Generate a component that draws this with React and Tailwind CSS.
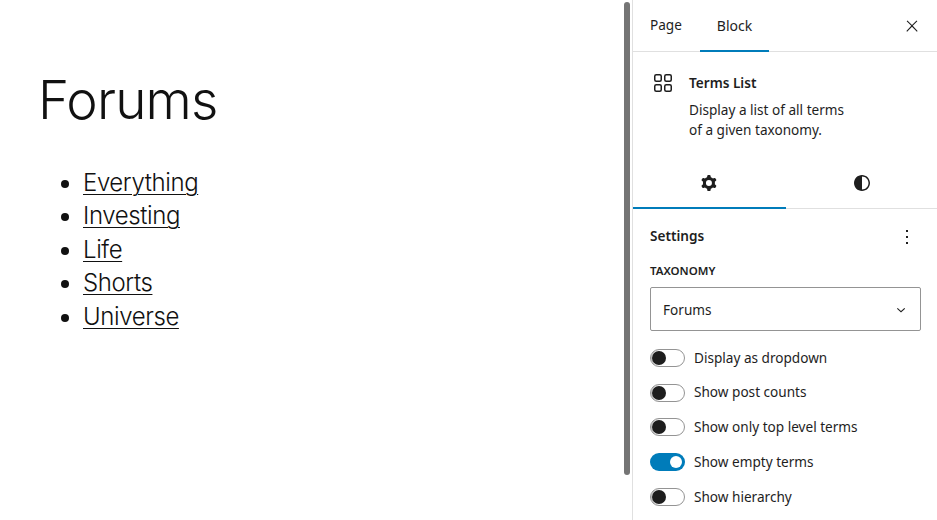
import React from 'react';

const Toggle = ({ label, on }) => (
  <div className="flex h-[19px] items-center gap-[9px]">
    {on ? (
      <span className="flex h-[18px] w-[35px] items-center justify-end rounded-full bg-[#007cba] pr-[3px]">
        <span className="h-[12px] w-[12px] rounded-full bg-white" />
      </span>
    ) : (
      <span className="flex h-[18px] w-[35px] items-center rounded-full border border-[#949494] pl-[1px] shadow-[inset_1px_0_0_#bbb]">
        <span className="h-[14px] w-[14px] rounded-full bg-[#1e1e1e]" />
      </span>
    )}
    <span className="text-[13.6px] text-[#1e1e1e]">{label}</span>
  </div>
);

const terms = ['Everything', 'Investing', 'Life', 'Shorts', 'Universe'];

export default function App() {
  return (
    <div className="flex h-[520px] w-[937px] overflow-hidden bg-white font-['Noto_Sans',sans-serif] text-[#1e1e1e]">
      <main className="w-[624px] pl-[38px] pt-[68px] font-['Inter',sans-serif] text-[#111]">
        <h1 className="text-[53px] font-light leading-[64px] tracking-[-0.8px]">Forums</h1>
        <ul className="ml-[45px] mt-[34px] list-disc text-[24px] font-light leading-[33.4px] tracking-[-0.4px] marker:text-[#111]">
          {terms.map((term) => (
            <li key={term}>
              <a href="#" className="underline decoration-1 underline-offset-[3px]">{term}</a>
            </li>
          ))}
        </ul>
      </main>

      <div className="w-[8px] pt-[2px]">
        <div className="h-[473px] w-[6px] rounded-full bg-[#757575]" />
      </div>

      <aside className="w-[305px] border-l border-[#e0e0e0]">
        <div className="flex h-[52px] items-stretch border-b border-[#e0e0e0]">
          <button className="w-[67px] px-[17px] text-left text-[13.6px] text-[#1e1e1e]">Page</button>
          <button className="relative w-[69px] text-[14px] text-[#1e1e1e]">
            Block
            <span className="absolute inset-x-0 bottom-[-1px] h-[2px] bg-[#007cba]" />
          </button>
          <button className="ml-auto flex w-[50px] items-center justify-center">
            <svg width="24" height="24" viewBox="0 0 24 24" fill="currentColor">
              <path d="M13 11.8l6.1-6.3-1-1-6.1 6.2-6.1-6.2-1 1 6.1 6.3-6.5 6.7 1 1 6.5-6.6 6.5 6.6 1-1z" transform="translate(3 3) scale(0.75)" />
            </svg>
          </button>
        </div>

        <div className="flex h-[105px] gap-[14px] pl-[18px] pt-[19px]">
          <svg width="24" height="24" viewBox="0 0 24 24" fill="none" stroke="#1e1e1e" strokeWidth="1.5" className="shrink-0">
            <rect x="3.75" y="3.75" width="6.5" height="6.5" rx="1.5" />
            <rect x="13.75" y="3.75" width="6.5" height="6.5" rx="1.5" />
            <rect x="3.75" y="13.75" width="6.5" height="6.5" rx="1.5" />
            <rect x="13.75" y="13.75" width="6.5" height="6.5" rx="1.5" />
          </svg>
          <div>
            <div className="text-[13.6px] font-semibold leading-[24px]">Terms List</div>
            <p className="mt-[5px] w-[165px] text-[13.6px] leading-[20px]">Display a list of all terms of a given taxonomy.</p>
          </div>
        </div>

        <div className="flex h-[52px] border-b border-[#e0e0e0]">
          <button className="relative flex w-[153px] shrink-0 items-center justify-center pr-[1px]">
            <svg width="24" height="24" viewBox="0 0 24 24" fill="#1e1e1e">
              <path fillRule="evenodd" clipRule="evenodd" d="M10.289 4.836A1 1 0 0 1 11.275 4h1.306a1 1 0 0 1 .987.836l.244 1.466c.787.26 1.503.679 2.108 1.218l1.393-.522a1 1 0 0 1 1.216.437l.653 1.13a1 1 0 0 1-.23 1.273l-1.148.944a6.025 6.025 0 0 1 0 2.435l1.149.946a1 1 0 0 1 .23 1.272l-.653 1.13a1 1 0 0 1-1.216.437l-1.394-.522c-.605.54-1.32.958-2.108 1.218l-.244 1.466a1 1 0 0 1-.987.836h-1.306a1 1 0 0 1-.986-.836l-.244-1.466a5.995 5.995 0 0 1-2.108-1.218l-1.394.522a1 1 0 0 1-1.217-.436l-.653-1.131a1 1 0 0 1 .23-1.272l1.149-.946a6.026 6.026 0 0 1 0-2.435l-1.148-.944a1 1 0 0 1-.23-1.272l.653-1.131a1 1 0 0 1 1.217-.437l1.393.522a5.994 5.994 0 0 1 2.108-1.218l.244-1.466ZM14.929 12a3 3 0 1 1-6 0 3 3 0 0 1 6 0Z" />
            </svg>
            <span className="absolute inset-x-0 bottom-[-1px] h-[2px] bg-[#007cba]" />
          </button>
          <button className="flex w-[151px] items-center justify-center pl-[1px]">
            <svg width="24" height="24" viewBox="0 0 24 24" fill="#1e1e1e">
              <path d="M12 4c-4.4 0-8 3.6-8 8s3.6 8 8 8 8-3.6 8-8-3.6-8-8-8zm0 14.5v-13c3.6 0 6.5 2.9 6.5 6.5s-2.9 6.5-6.5 6.5z" />
            </svg>
          </button>
        </div>

        <div className="px-[17px] pr-[16px]">
          <div className="flex h-[54px] items-center justify-between pt-[1px]">
            <span className="text-[13.6px] font-semibold">Settings</span>
            <svg width="24" height="24" viewBox="0 0 24 24" fill="#1e1e1e" className="mr-[2px]">
              <path d="M13 19h-2v-2h2v2zm0-6h-2v-2h2v2zm0-6h-2V5h2v2z" />
            </svg>
          </div>
          <div className="text-[11.5px] font-semibold uppercase leading-[15px]">Taxonomy</div>
          <div className="mt-[9px] flex h-[44px] items-center justify-between rounded-[2px] border border-[#949494] pl-[12px] pr-[7px]">
            <span className="pt-[2px] text-[13.6px]">Forums</span>
            <svg width="24" height="24" viewBox="0 0 24 24" fill="#1e1e1e">
              <path d="M17.5 11.6 16.4 10.5 12 14.6 7.6 10.5l-1 1.1 5.4 5z" transform="translate(3 3) scale(0.75)" />
            </svg>
          </div>
          <div className="mt-[17.4px] flex flex-col gap-[15.75px]">
            <Toggle label="Display as dropdown" />
            <Toggle label="Show post counts" />
            <Toggle label="Show only top level terms" />
            <Toggle label="Show empty terms" on />
            <Toggle label="Show hierarchy" />
          </div>
        </div>
      </aside>
    </div>
  );
}
